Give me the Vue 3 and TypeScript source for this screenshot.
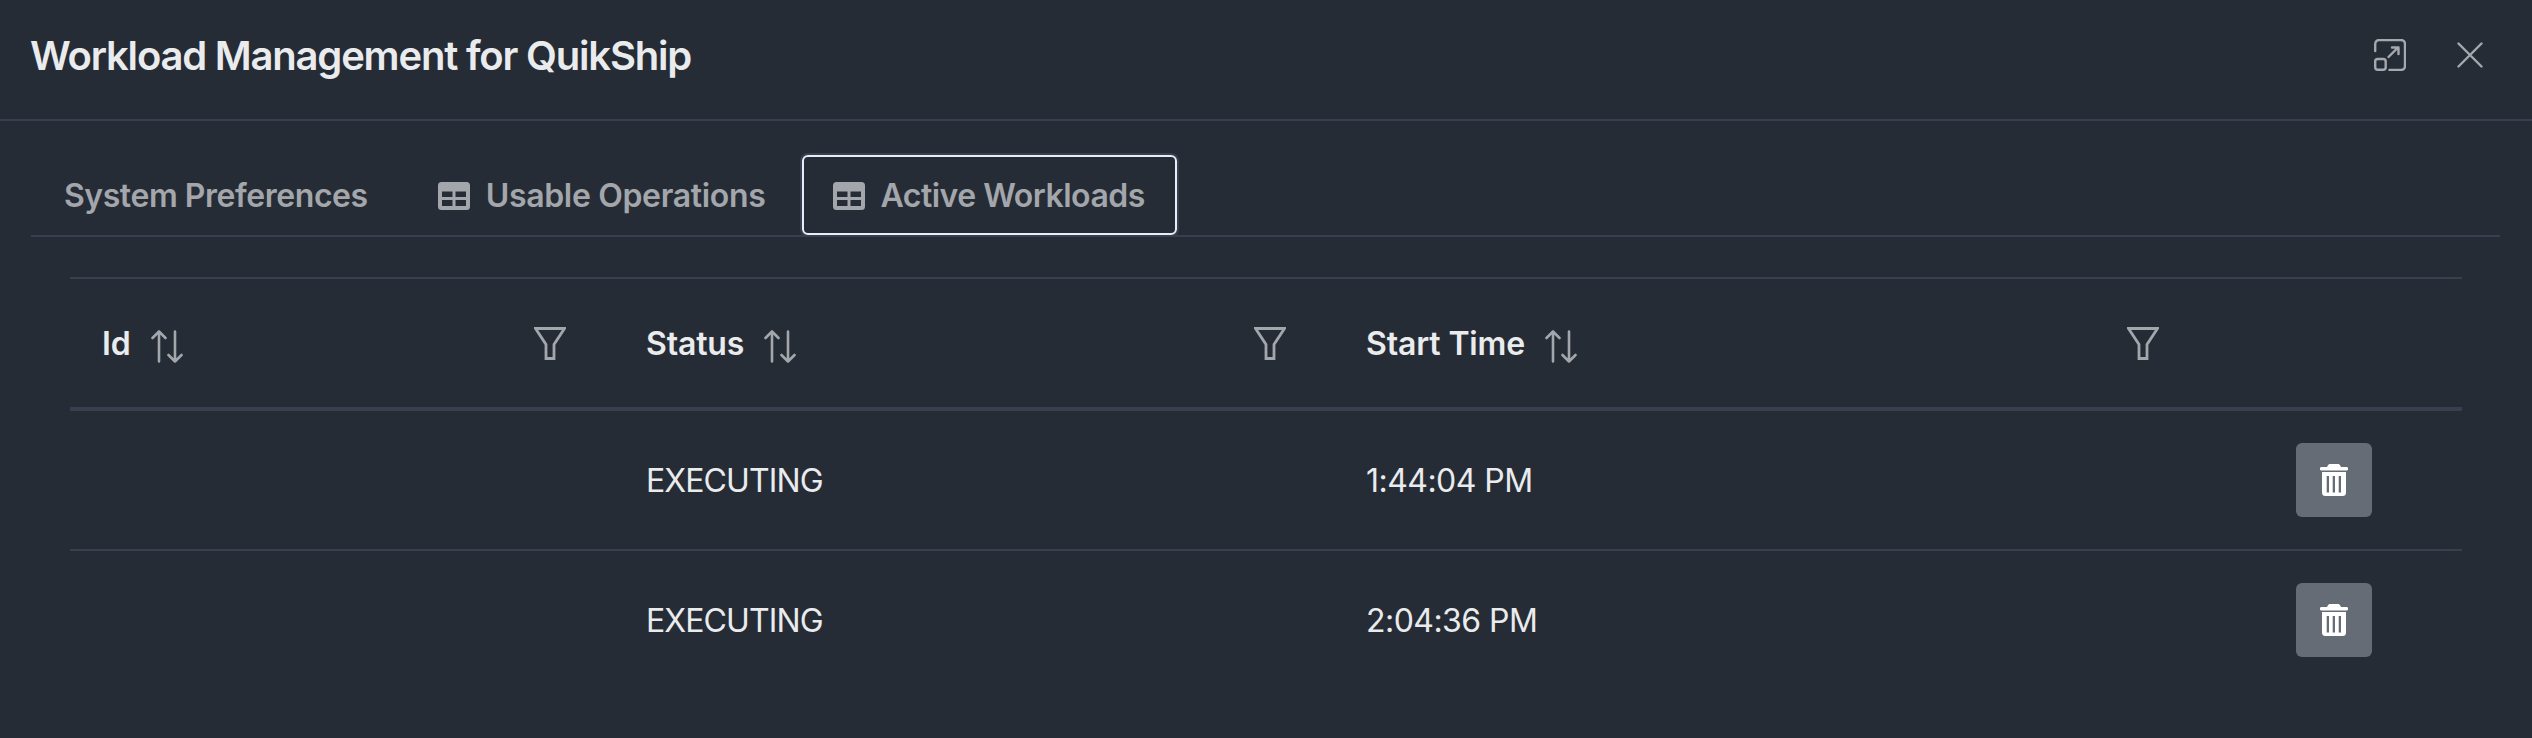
<script setup lang="ts">
interface Workload { id: string; status: string; start: string }
const columns: string[] = ['Id', 'Status', 'Start Time']
const rows: Workload[] = [
  { id: '', status: 'EXECUTING', start: '1:44:04 PM' },
  { id: '', status: 'EXECUTING', start: '2:04:36 PM' }
]
</script>

<template>
  <div class="dialog">
    <header class="head">
      <h1 class="title">Workload Management for QuikShip</h1>
      <div class="head-icons">
        <svg class="hicon" width="32" height="32" viewBox="0 0 32 32" fill="none" stroke="currentColor" stroke-width="2.4" stroke-linecap="round" stroke-linejoin="round">
          <path d="M1.200 12V5a4 4 0 0 1 4-4H27a4 4 0 0 1 4 4v22a4 4 0 0 1-4 4H15.500" />
          <rect x="1.200" y="20" width="10.500" height="10.800" rx="2.500" />
          <path d="M14.500 18 24 8.500M18 8.500H24.500V15" />
        </svg>
        <svg class="hicon" width="26" height="26" viewBox="0 0 26 26" fill="none" stroke="currentColor" stroke-width="2.400" stroke-linecap="round">
          <path d="M1.500 1.500 24.500 24.500M24.500 1.500 1.500 24.500" />
        </svg>
      </div>
    </header>

    <nav class="tabs">
      <div class="tab tab-first">System Preferences</div>
      <div class="tab tab-second">
        <svg class="ticon" width="32" height="28" viewBox="0 0 32 28"><path fill-rule="evenodd" d="M3.500 0h25A3.500 3.500 0 0 1 32 3.500V24.500a3.500 3.500 0 0 1-3.500 3.500h-25A3.500 3.500 0 0 1 0 24.500V3.500A3.500 3.500 0 0 1 3.500 0ZM4 9.500V15h10.500V9.500ZM17.500 9.500V15H28V9.500ZM4 18v6h10.500v-6ZM17.500 18v6H28v-6Z" fill="currentColor"/></svg>
        Usable Operations
      </div>
      <div class="tab tab-active">
        <svg class="ticon" width="32" height="28" viewBox="0 0 32 28"><path fill-rule="evenodd" d="M3.500 0h25A3.500 3.500 0 0 1 32 3.500V24.500a3.500 3.500 0 0 1-3.500 3.500h-25A3.500 3.500 0 0 1 0 24.500V3.500A3.500 3.500 0 0 1 3.500 0ZM4 9.500V15h10.500V9.500ZM17.500 9.500V15H28V9.500ZM4 18v6h10.500v-6ZM17.500 18v6H28v-6Z" fill="currentColor"/></svg>
        Active Workloads
      </div>
    </nav>

    <section class="table">
      <div class="row row-head">
        <div v-for="col in columns" :key="col" class="cell cell-head">
          <span class="col-label">{{ col }}</span>
          <svg class="sort" width="32" height="33" viewBox="0 0 32 33" fill="none" stroke="currentColor" stroke-width="2.600" stroke-linecap="round" stroke-linejoin="round">
            <path d="M8 31.500V1.500M1.500 8 8 1.500 14.500 8M24 1.500v30M17.500 25 24 31.500 30.500 25" />
          </svg>
          <svg class="filter" width="32" height="33" viewBox="0 0 32 33" fill="none" stroke="currentColor" stroke-width="2.800" stroke-linejoin="miter">
            <path d="M1.500 1.500h29L20 17.500V31.500H12V17.500Z" />
          </svg>
        </div>
        <div class="cell"></div>
      </div>
      <div v-for="(row, i) in rows" :key="i" class="row row-body">
        <div class="cell">{{ row.id }}</div>
        <div class="cell cell-status">{{ row.status }}</div>
        <div class="cell cell-time">{{ row.start }}</div>
        <div class="cell cell-action">
          <button class="del" type="button" aria-label="Delete">
            <svg width="28" height="32" viewBox="0 0 28 32"><path fill-rule="evenodd" d="M10 0h8c1 0 1.800.6 2.200 1.500L21 3h5.500a1.500 1.500 0 0 1 0 3.500h-25a1.500 1.500 0 0 1 0-3.500H7l.8-1.500C8.200.6 9 0 10 0ZM2 8h24V28.500a3.500 3.500 0 0 1-3.500 3.500h-17A3.500 3.500 0 0 1 2 28.500ZM6.700 12v16.500h2.300V12ZM12.700 12v16.500h2.300V12ZM18.700 12v16.500h2.300V12Z" fill="currentColor"/></svg>
          </button>
        </div>
      </div>
    </section>
  </div>
</template>

<style scoped>
.dialog {
  width: 2532px;
  height: 738px;
  background: #262c36;
  font-family: Inter, "Liberation Sans", sans-serif;
  color: #e9ebed;
  overflow: hidden;
  box-sizing: border-box;
}
.head {
  height: 121px;
  box-sizing: border-box;
  border-bottom: 2px solid #383f4e;
  padding: 0 49px 9px 30px;
  display: flex;
  align-items: center;
  justify-content: space-between;
}
.title {
  margin: 0;
  font-size: 40px;
  font-weight: 600;
  letter-spacing: -1.2px;
  color: #e9ebed;
}
.head-icons {
  display: flex;
  align-items: center;
  gap: 51px;
  color: #a5a8ad;
}
.hicon { display: block; }
.tabs {
  margin: 34px 32px 0 31px;
  height: 82px;
  box-sizing: border-box;
  border-bottom: 2px solid #383f4e;
  display: flex;
  gap: 3px;
}
.tab {
  height: 80px;
  box-sizing: border-box;
  display: flex;
  align-items: center;
  gap: 16px;
  padding: 1px 33px 0;
  font-size: 32px;
  font-weight: 600;
  letter-spacing: -0.5px;
  color: #a3a6ab;
  white-space: nowrap;
}
.tab-first {
  letter-spacing: -0.45px;
  margin-right: 1px;
}
.tab-second {
  letter-spacing: -0.33px;
  padding-right: 33px;
}
.tab-active {
  border: 2px solid #e6eefa;
  border-radius: 6px;
  box-shadow: 0 0 0 2px #383f4e;
  padding: 1px 30px 0 29px;
}
.ticon { flex: none; }
.table {
  margin: 40px 70px 0;
  border-top: 2px solid #383f4e;
}
.row {
  display: grid;
  grid-template-columns: 544px 720px 873px 253px;
  box-sizing: border-box;
}
.row-head {
  height: 132px;
  border-bottom: 4px solid #383f4e;
}
.row-body {
  height: 140px;
  border-bottom: 2px solid #383f4e;
}
.row-body:last-child {
  height: 138px;
  border-bottom: 0;
}
.cell {
  display: flex;
  align-items: center;
  padding: 0 32px;
  font-size: 32px;
  color: #e9ebed;
}
.cell-status { letter-spacing: -0.9px; }
.cell-time { letter-spacing: -0.55px; }
.cell-head {
  font-weight: 600;
  gap: 20px;
  letter-spacing: -0.15px;
}
.col-label { padding-top: 1px; }
.sort { color: #a3a6ab; flex: none; margin-top: 6px; }
.filter { color: #a3a6ab; flex: none; margin-left: auto; margin-right: 16px; }
.cell-action { justify-content: center; padding: 0; }
.del {
  width: 76px;
  height: 74px;
  border: 0;
  border-radius: 6px;
  background: #656c75;
  color: #fff;
  display: flex;
  align-items: center;
  justify-content: center;
  padding: 0;
}
</style>

<style>
html, body { margin: 0; background: #262c36; }
</style>
